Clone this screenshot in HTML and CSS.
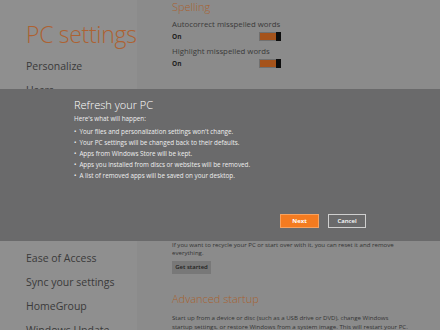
FILE: index.html
```html
<!DOCTYPE html>
<html lang="en">
<head>
<meta charset="utf-8">
<title>PC settings</title>
<link rel="stylesheet" href="styles.css">
</head>
<body>
<div class="screen">
  <aside class="nav-pane">
    <h1 class="app-title">PC settings</h1>
    <ul class="nav-list">
      <li>Personalize</li>
      <li>Users</li>
      <li>Notifications</li>
      <li>Search</li>
      <li>Share</li>
      <li>General</li>
      <li>Privacy</li>
      <li>Devices</li>
      <li>Ease of Access</li>
      <li>Sync your settings</li>
      <li>HomeGroup</li>
      <li>Windows Update</li>
    </ul>
  </aside>
  <main class="content-pane">
    <section class="section spelling">
      <h2 class="section-title">Spelling</h2>
      <div class="setting">
        <div class="setting-label">Autocorrect misspelled words</div>
        <div class="setting-row"><span class="state">On</span><span class="toggle"><span class="toggle-track"></span><span class="toggle-thumb"></span></span></div>
      </div>
      <div class="setting">
        <div class="setting-label">Highlight misspelled words</div>
        <div class="setting-row"><span class="state">On</span><span class="toggle"><span class="toggle-track"></span><span class="toggle-thumb"></span></span></div>
      </div>
    </section>
    <section class="section refresh-section">
      <h2 class="section-title">Refresh your PC without affecting your files</h2>
      <p class="desc">If your PC isn't running well, you can refresh it without losing your photos,<br>music, videos, and other personal files.</p>
      <button class="action">Get started</button>
    </section>
    <section class="section reset-section">
      <h2 class="section-title">Remove everything and reinstall Windows</h2>
      <p class="desc">If you want to recycle your PC or start over with it, you can reset it and remove<br>everything.</p>
      <button class="action">Get started</button>
    </section>
    <section class="section advanced-section">
      <h2 class="section-title">Advanced startup</h2>
      <p class="desc">Start up from a device or disc (such as a USB drive or DVD), change Windows<br>startup settings, or restore Windows from a system image. This will restart your PC.</p>
    </section>
  </main>
  <div class="dialog-band">
    <div class="dialog">
      <h2 class="dialog-title">Refresh your PC</h2>
      <p class="dialog-intro">Here's what will happen:</p>
      <ul class="dialog-list">
        <li>Your files and personalization settings won't change.</li>
        <li>Your PC settings will be changed back to their defaults.</li>
        <li>Apps from Windows Store will be kept.</li>
        <li>Apps you installed from discs or websites will be removed.</li>
        <li>A list of removed apps will be saved on your desktop.</li>
      </ul>
      <div class="dialog-buttons">
        <button class="btn btn-primary">Next</button>
        <button class="btn">Cancel</button>
      </div>
    </div>
  </div>
</div>
</body>
</html>
```
FILE: styles.css
```css
* {
  box-sizing: border-box;
  margin: 0;
  padding: 0;
}

body {
  margin: 0;
  font-family: "Open Sans", "Noto Sans", sans-serif;
  background: #8b8b8b;
}

.screen {
  position: relative;
  width: 440px;
  height: 330px;
  overflow: hidden;
  display: grid;
  grid-template-columns: 137px 1fr;
}

/* left navigation */
.nav-pane {
  background: #8f8f8f;
  padding: 20px 0 0 26px;
}

.app-title {
  font-weight: 300;
  font-size: 23px;
  line-height: 28px;
  letter-spacing: -0.3px;
  color: #ad6232;
  white-space: nowrap;
  margin-bottom: 6px;
}

.nav-list {
  list-style: none;
}

.nav-list li {
  font-size: 10.5px;
  line-height: 24px;
  color: #3a3a3a;
  white-space: nowrap;
}

/* right content */
.content-pane {
  background: #8b8b8b;
  padding-left: 35px;
  min-width: 0;
}

.section-title {
  font-weight: 300;
  font-size: 11px;
  line-height: 14px;
  color: #a8622f;
  white-space: nowrap;
}

.spelling .section-title {
  margin-bottom: 5px;
}

.setting + .setting {
  margin-top: 5px;
}

.setting-label {
  font-size: 7.8px;
  line-height: 11px;
  color: #3a3a3a;
  white-space: nowrap;
}

.setting-row {
  display: flex;
  align-items: center;
  justify-content: space-between;
  width: 109px;
  height: 10px;
  margin-top: 1px;
}

.state {
  font-size: 6.5px;
  font-weight: 700;
  color: #222;
}

.toggle {
  display: flex;
  width: 22px;
  height: 9px;
}

.toggle-track {
  flex: 1;
  background: #a5531b;
  border: 1px solid #707070;
  border-right: 0;
}

.toggle-thumb {
  width: 5px;
  background: #0d0d0d;
}

/* this section sits under the dialog band */
.refresh-section {
  height: 150px;
  padding-top: 30px;
}

.refresh-section .section-title {
  margin-bottom: 6px;
}

.reset-section .section-title {
  margin-bottom: 8.7px;
}

.desc {
  font-size: 6.1px;
  line-height: 8.6px;
  color: #333;
  white-space: nowrap;
}

.action {
  display: block;
  width: 39px;
  height: 13px;
  margin-top: 3.1px;
  border: 0;
  background: #787878;
  color: #222;
  font-family: inherit;
  font-size: 6px;
  line-height: 13px;
  font-weight: 600;
}

.advanced-section {
  margin-top: 18px;
}

.advanced-section .section-title {
  margin-bottom: 8px;
}

/* modal band */
.dialog-band {
  position: absolute;
  left: 0;
  top: 89px;
  width: 440px;
  height: 152px;
  background: #6a6a6b;
  padding: 0 74px;
}

.dialog {
  height: 100%;
  display: flex;
  flex-direction: column;
  padding: 8.6px 0 13px;
  color: #fff;
}

.dialog-title {
  font-weight: 300;
  font-size: 11px;
  line-height: 14px;
  white-space: nowrap;
}

.dialog-intro {
  margin-top: 1px;
  font-size: 6.3px;
  line-height: 11px;
  color: #eee;
}

.dialog-list {
  margin-top: 2px;
  list-style: none;
}

.dialog-list li {
  font-size: 6.3px;
  line-height: 11px;
  color: #eee;
  white-space: nowrap;
}

.dialog-list li::before {
  content: "\2022";
  margin-right: 3px;
}

.dialog-buttons {
  margin-top: auto;
  display: flex;
  justify-content: flex-end;
  gap: 9px;
}

.btn {
  width: 38px;
  height: 14px;
  padding: 0;
  border: 1px solid #cfcfcf;
  background: transparent;
  color: #fff;
  font-family: inherit;
  font-size: 6px;
  line-height: 12px;
  font-weight: 600;
}

.btn-primary {
  width: 39px;
  background: #f47b20;
  border-color: #f8a25e;
  font-weight: 700;
}
```
